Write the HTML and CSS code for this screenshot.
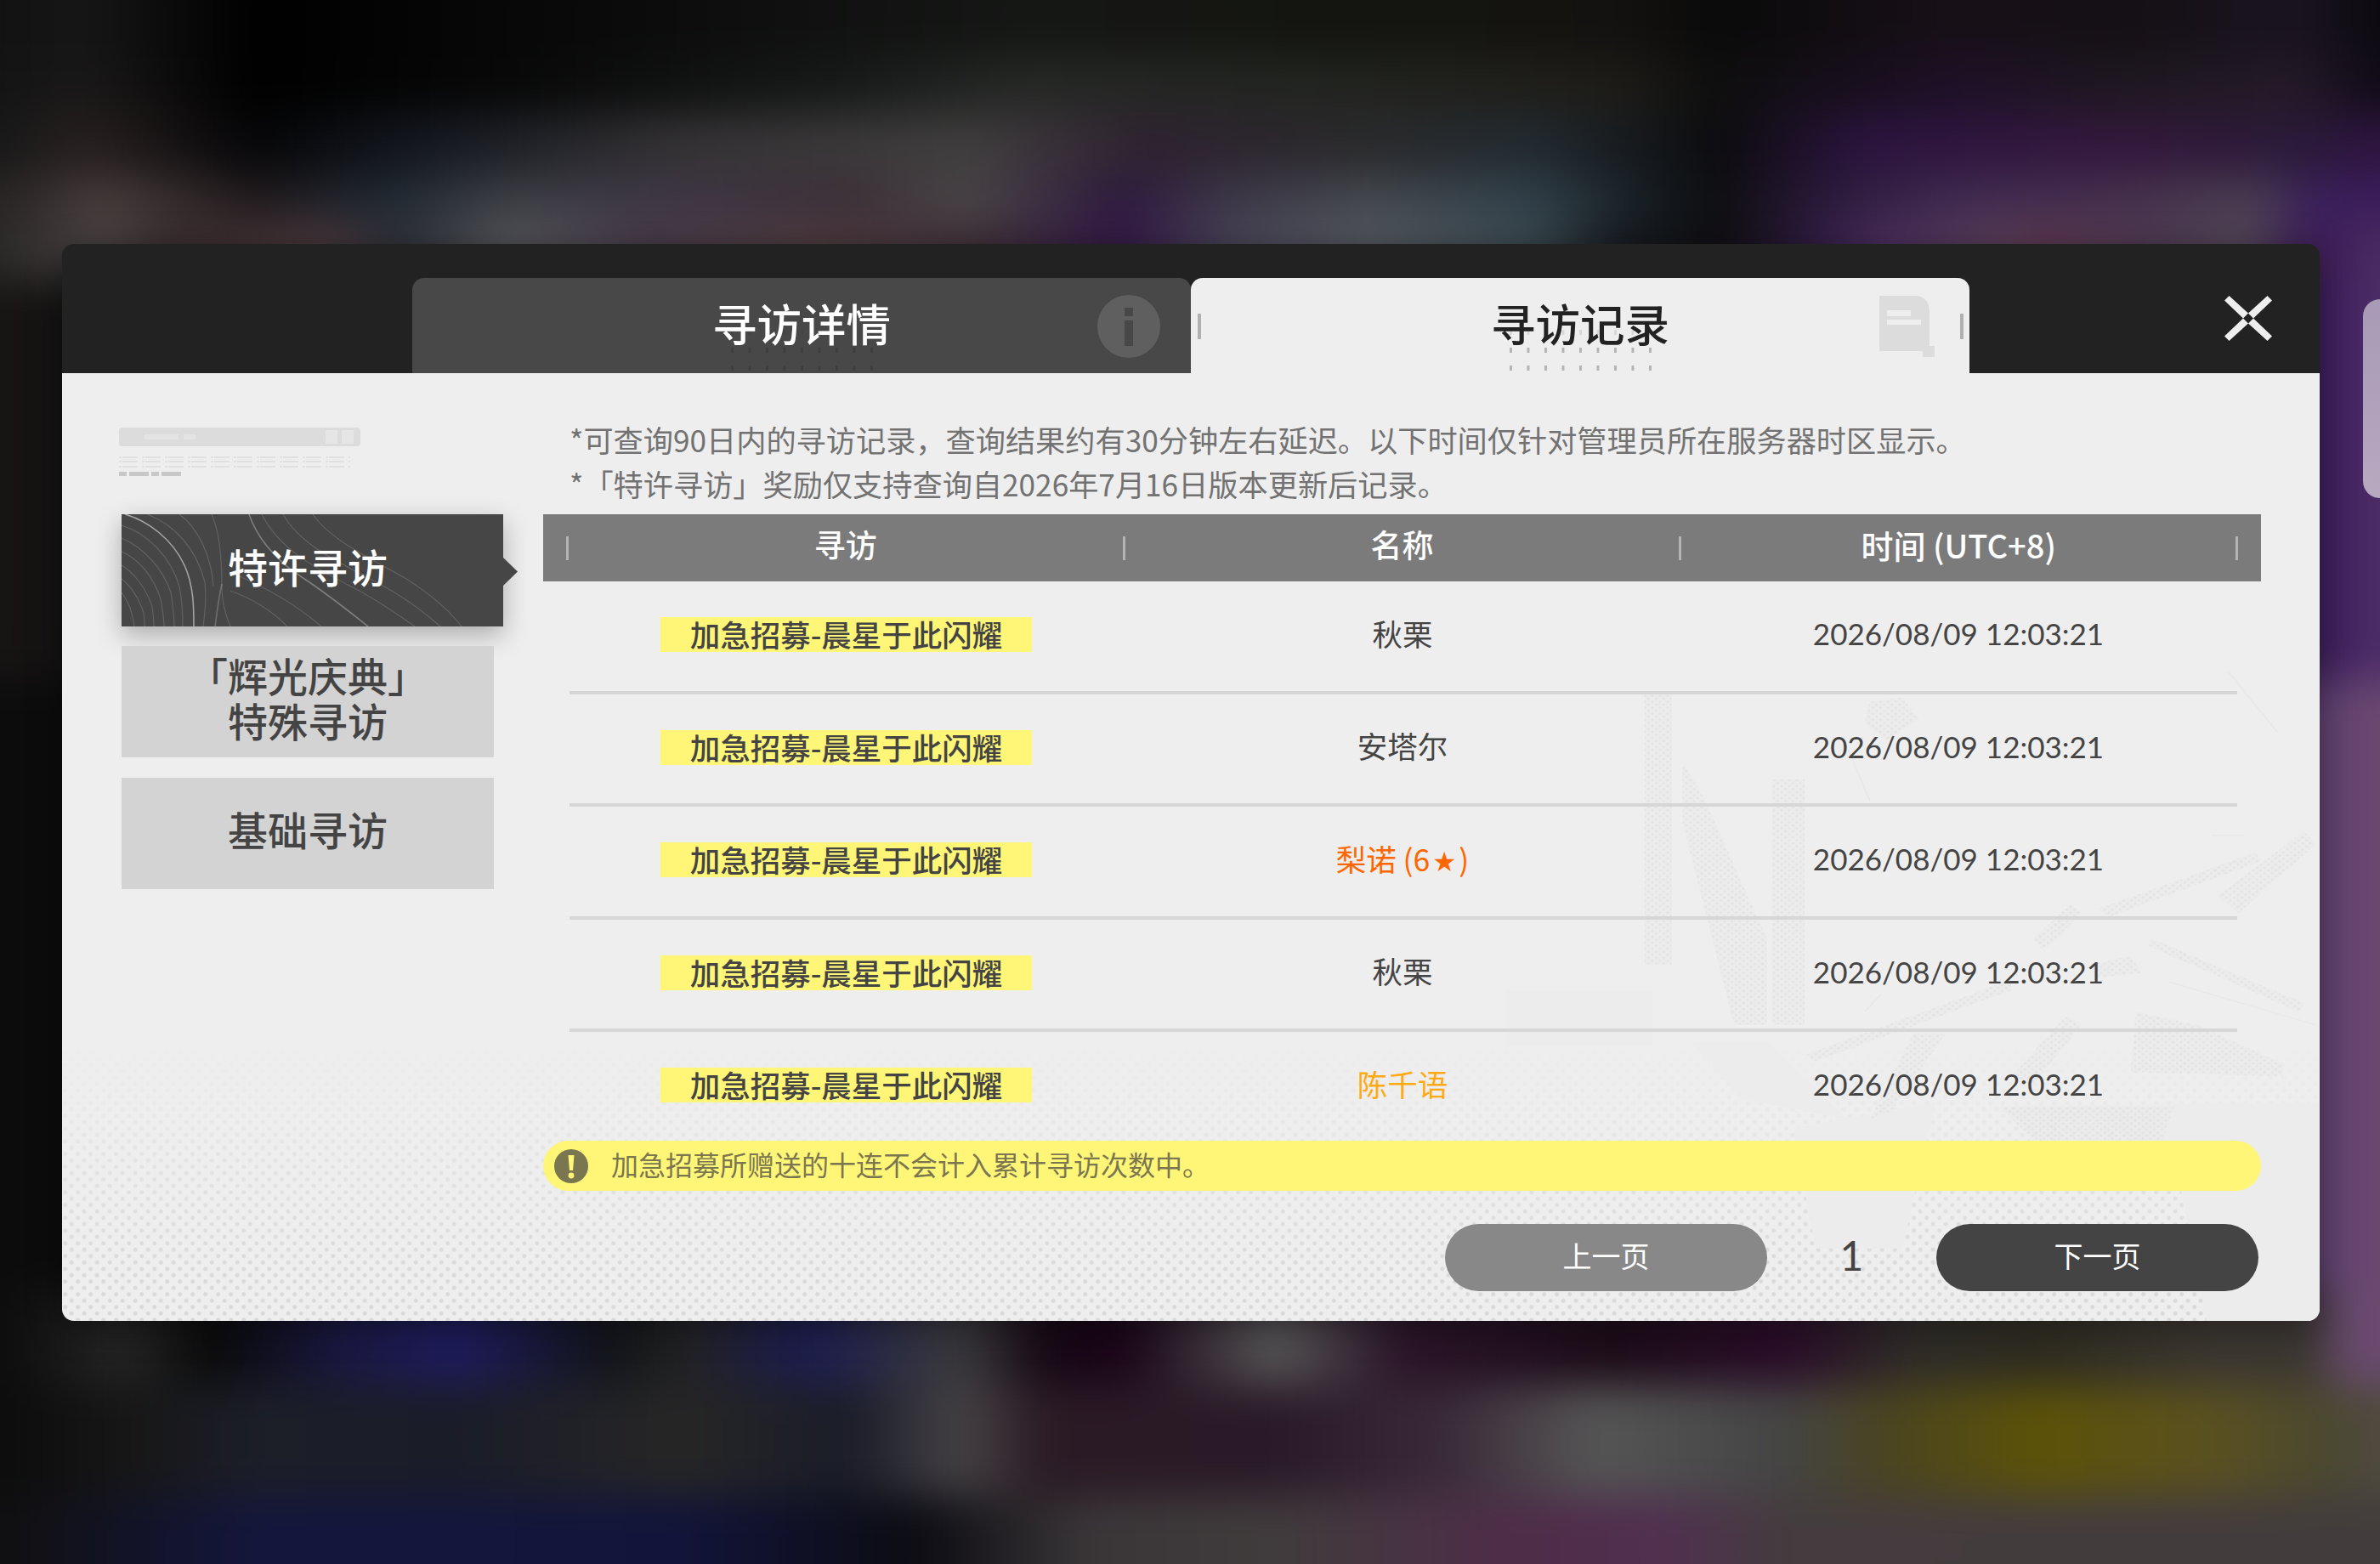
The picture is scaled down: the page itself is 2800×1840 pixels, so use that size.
FILE: index.html
```html
<!DOCTYPE html>
<html lang="zh-CN">
<head>
<meta charset="utf-8">
<title>寻访记录</title>
<link rel="stylesheet" href="styles.css">
</head>
<body>
<div class="backdrop">
  <div class="band b0"></div>
  <div class="band b1"></div>
  <div class="band b2"></div>
  <div class="band b3"></div>
  <div class="band b4"></div>
  <div class="band b5"></div>
  <div class="band b6"></div>
  <div class="band b7"></div>
  <div class="band b8"></div>
  <div class="band b9"></div>
</div>
<div class="edge-handle"></div>
<section class="modal">
  <header class="modal-head">
    <nav class="tabs">
      <div class="tab tab-off">
        <span class="tab-label">寻访详情</span>
        <span class="tab-dots"></span>
        <svg class="tab-icon" viewBox="0 0 74 74"><circle cx="37" cy="37" r="37" fill="#5f5f5f"/><rect x="32" y="15" width="10" height="10" fill="#484848"/><rect x="32" y="30" width="10" height="30" fill="#484848"/></svg>
      </div>
      <div class="tab tab-on">
        <span class="tab-sep tab-sep-l"></span>
        <span class="tab-label">寻访记录</span>
        <span class="tab-dots"></span>
        <svg class="tab-icon tab-icon-doc" viewBox="0 0 66 72"><path d="M0 0H42C53 0 59 8 59 18V65H0Z" fill="#dcdcdc"/><rect x="9" y="17" width="28" height="7" fill="#eee"/><rect x="9" y="28" width="40" height="6" fill="#eee"/><rect x="51" y="59" width="14" height="13" fill="#dcdcdc"/></svg>
        <span class="tab-sep tab-sep-r"></span>
      </div>
    </nav>
    <svg class="close" viewBox="0 0 56 53"><path d="M0 5.5L5.500 0L28 20.500L22 26.500ZM56 5.500L50.500 0L28 20.500L34 26.500ZM0 47.500L5.500 53L28 32.500L22 26.500ZM56 47.500L50.500 53L28 32.500L34 26.500Z" fill="#eee"/></svg>
  </header>
  <div class="modal-body">
    <svg class="watermark" viewBox="0 0 1568 1568" preserveAspectRatio="none">
      <defs>
        <pattern id="wm" width="14" height="14" patternUnits="userSpaceOnUse">
          <rect width="14" height="14" fill="#ebebeb"/>
          <circle cx="3.500" cy="3.500" r="3" fill="#dedede"/>
          <circle cx="10.500" cy="10.500" r="3" fill="#dedede"/>
        </pattern>
      </defs>
      <g fill="#ececec">
        <path d="M70 800H340V930H70Z"/>
        <path d="M410 920H550L700 1100L500 1050Z"/>
        <path d="M970 1070L1568 1060V1568H1360L1300 1180L1130 1090L1050 1130Z"/>
        <path d="M600 1120L860 1060L800 1400L640 1400Z"/>
      </g>
      <g fill="url(#wm)" opacity=".6">
        <path d="M325 110H375V740H325Z"/>
        <path d="M560 310H620V880H560Z"/>
        <path d="M395 270L430 340L550 680V880H490L395 410Z"/>
        <path d="M620 950L1000 775V800L640 965Z"/>
        <path d="M1040 680L1110 600L1130 620L1060 710Z"/>
        <path d="M1160 610L1450 480L1460 500L1180 630Z"/>
        <path d="M1260 680L1540 830L1530 850L1250 695Z"/>
        <path d="M1230 850L1340 880L1500 970V1000L1220 990Z"/>
        <path d="M820 900H880L780 1080L740 1100Z"/>
        <path d="M1100 860L1130 880L1040 1020L1000 1000Z"/>
        <path d="M1380 580L1540 430L1560 460L1420 620Z"/>
        <path d="M740 130L800 120L830 170L770 220L730 180Z"/>
        <path d="M1150 740L1220 720L1240 760L1160 770Z"/>
        <path d="M980 1070L1300 1070L1250 1260L1130 1180L1040 1150Z"/>
      </g>
      <g fill="none" stroke="#e8e8e8" stroke-width="3">
        <path d="M700 240L740 360"/>
        <path d="M1400 60L1490 200"/>
        <path d="M1290 780L1560 880"/>
        <path d="M760 810L730 850"/>
        <path d="M1370 440H1430"/>
      </g>
    </svg>
    <aside class="side">
      <div class="promo">
        <div class="promo-bar"></div>
        <div class="promo-lines"></div>
        <div class="promo-tags"><i></i><i class="w"></i><i></i><i class="w"></i></div>
      </div>
      <div class="side-item side-item-on">
        <svg class="contour" viewBox="0 0 449 132" preserveAspectRatio="none">
          <g fill="none" stroke="#fff" stroke-opacity=".15" stroke-width="1.200">
            <path d="M0 13C30 22 58 50 68 85C71 100 72 118 72 132"/>
            <path d="M0 28C24 38 48 62 58 92C60 105 62 120 62 132"/>
            <path d="M0 44C20 52 38 74 46 100C48 112 50 122 50 132"/>
            <path d="M0 60C14 68 28 86 36 108C37 116 38 124 38 132"/>
            <path d="M0 76C10 84 20 98 26 116C27 122 27 127 27 132"/>
            <path d="M0 92C6 100 12 110 15 132"/>
            <path d="M30 0C62 12 88 40 98 80C100 100 98 118 96 132"/>
            <path d="M68 0C90 16 106 50 108 85"/>
            <path d="M106 0C115 20 118 50 118 85C118 100 122 118 128 132"/>
            <path d="M128 90C155 100 175 112 195 132"/>
            <path d="M132 70C165 84 205 106 235 132"/>
            <path d="M165 0C185 40 225 62 270 85C300 100 325 118 345 132"/>
            <path d="M190 0C210 36 255 56 300 80C330 96 355 114 375 132"/>
            <path d="M225 0C245 30 290 50 335 76C360 92 385 112 400 132"/>
          </g>
          <g fill="none" stroke="#fff" stroke-width="1.600">
            <path d="M4 0C32 8 60 30 74 60C85 84 85 110 85 132" stroke-opacity=".5"/>
            <path d="M118 82C114 100 112 118 110 132" stroke-opacity=".22"/>
            <path d="M150 0C158 24 178 52 212 74C240 92 265 112 290 132" stroke-opacity=".3"/>
          </g>
        </svg>
        <span class="side-label">特许寻访</span>
      </div>
      <div class="side-item"><span class="side-label">「辉光庆典」<br>特殊寻访</span></div>
      <div class="side-item"><span class="side-label">基础寻访</span></div>
    </aside>
    <main class="main">
      <div class="notes">
        <p>*可查询90日内的寻访记录，查询结果约有30分钟左右延迟。以下时间仅针对管理员所在服务器时区显示。</p>
        <p>*「特许寻访」奖励仅支持查询自2026年7月16日版本更新后记录。</p>
      </div>
      <div class="thead">
        <i class="sep"></i><span class="th">寻访</span><i class="sep"></i><span class="th">名称</span><i class="sep"></i><span class="th th-time">时间 (UTC+8)</span><i class="sep"></i>
      </div>
      <div class="rows">
        <div class="row"><span class="cell cell-mark"><b class="mark">加急招募-晨星于此闪耀</b></span><span class="cell">秋栗</span><span class="cell time">2026/08/09 12:03:21</span></div>
        <div class="row"><span class="cell cell-mark"><b class="mark">加急招募-晨星于此闪耀</b></span><span class="cell">安塔尔</span><span class="cell time">2026/08/09 12:03:21</span></div>
        <div class="row"><span class="cell cell-mark"><b class="mark">加急招募-晨星于此闪耀</b></span><span class="cell six">梨诺 (6<span class="star">★</span>)</span><span class="cell time">2026/08/09 12:03:21</span></div>
        <div class="row"><span class="cell cell-mark"><b class="mark">加急招募-晨星于此闪耀</b></span><span class="cell">秋栗</span><span class="cell time">2026/08/09 12:03:21</span></div>
        <div class="row"><span class="cell cell-mark"><b class="mark">加急招募-晨星于此闪耀</b></span><span class="cell five">陈千语</span><span class="cell time">2026/08/09 12:03:21</span></div>
      </div>
      <div class="alert">
        <svg class="alert-icon" viewBox="0 0 40 40"><circle cx="20" cy="20" r="20" fill="#7a7650"/><path d="M16.500 7H23.500L22 25H18Z" fill="#fff678"/><circle cx="20" cy="31" r="3.400" fill="#fff678"/></svg>
        <span class="alert-text">加急招募所赠送的十连不会计入累计寻访次数中。</span>
      </div>
      <div class="pager">
        <span class="btn btn-prev">上一页</span>
        <span class="page-no">1</span>
        <span class="btn btn-next">下一页</span>
      </div>
    </main>
  </div>
</section>
</body>
</html>
```
FILE: styles.css
```css
* { box-sizing: border-box; }
html, body { margin: 0; height: 1840px; }
body {
  width: 2800px;
  overflow: hidden;
  position: relative;
  padding: 287px 0 0 73px;
  font-family: "Noto Sans CJK SC", sans-serif;
  background: #08080a;
}
.backdrop {
  position: absolute;
  left: -60px;
  top: -60px;
  width: 2920px;
  height: 1960px;
  display: flex;
  flex-direction: column;
  filter: blur(24px);
}
.band { flex: none; }
.b0 { height: 128px; background: linear-gradient(90deg, #121212 60px, #161616 160px, #000 360px, #0a0a0a 760px, #151715 1260px, #141510 1660px, #141210 1960px, #0a0a0a 2080px, #181018 2360px, #141014 2560px, #1a1420 2760px, #0c0a10 2860px); }
.b1 { height: 67px; background: linear-gradient(90deg, #141414 60px, #1a1818 160px, #000 360px, #080808 660px, #181a1a 1060px, #262826 1260px, #222420 1660px, #1e1c18 1960px, #0e0e0e 2080px, #1e1028 2360px, #1e1820 2560px, #241a28 2760px, #100a18 2860px); }
.b2 { height: 70px; background: linear-gradient(90deg, #181818 60px, #282020 160px, #060608 360px, #141820 560px, #343234 860px, #403e3e 1200px, #2e2230 1410px, #2a2a2c 1660px, #222a30 1860px, #0c0c0e 2080px, #2c1440 2260px, #34183c 2560px, #2a1a38 2760px, #2e1440 2860px); }
.b3 { height: 57px; background: linear-gradient(90deg, #282424 60px, #463c3c 180px, #201a1c 360px, #202832 510px, #3c3e44 660px, #3e3644 860px, #3c3038 1060px, #484446 1200px, #2e1a3e 1380px, #3c3848 1510px, #44484e 1670px, #30404a 1860px, #141a1e 2010px, #0e0e10 2080px, #2a1a3a 2210px, #402a50 2360px, #44304c 2560px, #4a3c50 2710px, #38205a 2780px, #3c1c5c 2860px); }
.b4 { height: 68px; background: linear-gradient(90deg, #2a2828 60px, #4d4545 180px, #3a2c30 260px, #4d3a3e 440px, #2d3038 530px, #57585c 660px, #483c4a 810px, #503c40 1010px, #3f3038 1210px, #351848 1380px, #4a4558 1510px, #565a62 1670px, #3a4a50 1860px, #181c22 1960px, #0e0e10 2080px, #2c1a3c 2180px, #4a2c60 2260px, #5a4058 2410px, #5e3850 2460px, #4e3c54 2610px, #554a58 2700px, #3c1a58 2780px, #4a2c60 2860px); }
.b5 { height: 470px; background: linear-gradient(90deg, #181414 60px, #141212 133px, #222 1400px, #3c1c5a 2789px, #4e2e68 2860px); }
.b6 { height: 720px; background: linear-gradient(90deg, #0c0c0c 133px, #222 1400px, #5e4070 2789px, #6a4a70 2860px); }
.b7 { height: 110px; background: linear-gradient(90deg, #0c0c0c 60px, #252525 203px, #0a0a0a 310px, #1a1840 460px, #1e1c5c 600px, #121418 780px, #222 860px, #1c1c50 1010px, #3a3a3c 1190px, #160814 1290px, #1a0418 1381px, #555 1560px, #2a1428 1710px, #1c0c18 1960px, #2a0c28 2160px, #2e2c28 2310px, #2e2c20 2460px, #3a3630 2660px, #3a3630 2780px, #6a4a70 2820px); }
.b8 { height: 130px; background: linear-gradient(90deg, #0c0c0c 60px, #161616 203px, #1c1e28 360px, #1a1c28 600px, #262626 860px, #1a1c28 1060px, #454245 1190px, #2a1a24 1290px, #2a1a28 1560px, #3a2a38 1760px, #555 1935px, #444 2160px, #4a4420 2280px, #5c5208 2460px, #5a5020 2660px, #4a4830 2800px, #504a40 2860px); }
.b9 { height: 140px; background: linear-gradient(90deg, #101010 60px, #14163c 360px, #14163c 600px, #12143a 860px, #0c0c12 1140px, #3a3638 1340px, #403c3c 1560px, #4e2c48 1840px, #503050 2020px, #443c3e 2160px, #423c3c 2860px); }
.edge-handle {
  position: absolute;
  left: 2780px;
  top: 352px;
  width: 40px;
  height: 234px;
  border-radius: 22px;
  background: linear-gradient(#a899b6, #b8a8c0);
}
.modal {
  position: relative;
  width: 2656px;
  height: 1267px;
  background: #222;
  border-radius: 14px;
  overflow: hidden;
  box-shadow: 0 6px 40px rgba(0,0,0,.4);
}
.modal-head {
  height: 152px;
  padding: 40px 0 0 412px;
  display: flex;
  align-items: flex-start;
}
.tabs { display: flex; height: 112px; }
.tab {
  position: relative;
  width: 916px;
  height: 112px;
  border-radius: 14px 14px 0 0;
  display: flex;
  justify-content: center;
  padding-top: 15px;
}
.tab-off { background: #484848; color: #fff; }
.tab-on { background: #eee; color: #222; }
.tab-label { position: relative; z-index: 1; font-size: 52.500px; line-height: 74px; font-weight: 500; }
.tab-dots {
  position: absolute;
  left: 375px;
  top: 61px;
  width: 167px;
  height: 48px;
  background-image:
    linear-gradient(90deg, #3e3e3e 3px, transparent 3px),
    linear-gradient(90deg, #3e3e3e 3px, transparent 3px),
    linear-gradient(90deg, #444 3px, transparent 3px);
  background-size: 20.500px 6px;
  background-position: 0 21px, 0 42px, 0 0;
  background-repeat: repeat-x;
}
.tab-on .tab-dots {
  background-image:
    linear-gradient(90deg, #b4b4b4 3px, transparent 3px),
    linear-gradient(90deg, #b4b4b4 3px, transparent 3px),
    linear-gradient(90deg, #d8d8d8 3px, transparent 3px);
}
.tab-icon { position: absolute; left: 806px; top: 20px; width: 74px; height: 74px; }
.tab-icon-doc { left: 810px; top: 21px; width: 66px; height: 72px; }
.tab-sep { position: absolute; top: 42px; width: 4px; height: 30px; background: #b0b0b0; }
.tab-sep-l { left: 8px; }
.tab-sep-r { right: 7px; }
.close { width: 56px; height: 53px; margin: 21px 0 0 300px; }
.modal-body {
  position: relative;
  height: 1115px;
  display: flex;
  background-color: #eee;
  overflow: hidden;
}
.modal-body::before {
  content: "";
  position: absolute;
  inset: 0;
  background-image:
    radial-gradient(circle at 3.700px 3.700px, #dadada 0 1.800px, transparent 3.200px),
    radial-gradient(circle at 11.200px 11.200px, #dadada 0 1.800px, transparent 3.200px);
  background-size: 15px 15px;
  -webkit-mask-image: linear-gradient(transparent 790px, #000 1060px);
  mask-image: linear-gradient(transparent 790px, #000 1060px);
}
.watermark { position: absolute; left: 1654px; top: 321px; width: 1002px; height: 794px; }
.side {
  position: relative;
  width: 566px;
  flex: none;
  padding: 64px 0 0 70px;
}
.promo { height: 102px; margin-left: -3px; }
.promo-bar {
  width: 284px;
  height: 22px;
  border-radius: 4px;
  background-color: #dcdcdc;
  background-image:
    linear-gradient(#e4e4e4, #e4e4e4),
    linear-gradient(#e4e4e4, #e4e4e4),
    linear-gradient(#e6e6e6, #e6e6e6),
    linear-gradient(#e6e6e6, #e6e6e6);
  background-repeat: no-repeat;
  background-size: 40px 6px, 14px 6px, 14px 16px, 14px 16px;
  background-position: 30px 8px, 76px 8px, 243px 3px, 262px 3px;
  filter: blur(.6px);
}
.promo-lines {
  width: 272px;
  height: 16px;
  margin-top: 12px;
  background-image: repeating-linear-gradient(90deg, #e0e0e0 0 3px, transparent 3px 4px, #e0e0e0 4px 22px, transparent 22px 27px);
  -webkit-mask-image: repeating-linear-gradient(#000 0 2px, transparent 2px 5.500px);
  mask-image: repeating-linear-gradient(#000 0 2px, transparent 2px 5.500px);
  filter: blur(.5px);
}
.promo-tags { display: flex; gap: 3px; margin-top: 2px; filter: blur(.4px); }
.promo-tags i { width: 9px; height: 5px; background: #c8c8c8; }
.promo-tags i.w { width: 23px; }
.side-item {
  position: relative;
  width: 438px;
  height: 131px;
  margin-bottom: 24px;
  background: #d3d3d3;
  color: #444;
  display: flex;
  align-items: center;
  justify-content: center;
  text-align: center;
}
.side-label { position: relative; margin-top: -12px; font-size: 47px; line-height: 53px; font-weight: 500; }
.side-item-on {
  width: 449px;
  height: 132px;
  margin-bottom: 23px;
  padding-right: 11px;
  background: #464646;
  color: #fff;
  box-shadow: 0 10px 28px rgba(0,0,0,.28);
}
.side-item-on::after {
  content: "";
  position: absolute;
  left: 100%;
  top: 51px;
  width: 17px;
  height: 33px;
  background: #464646;
  clip-path: polygon(0 0, 100% 50%, 0 100%);
}
.contour { position: absolute; inset: 0; width: 100%; height: 100%; }
.main { position: relative; width: 2021px; padding-top: 52px; }
.notes { height: 114px; padding-left: 31px; color: #727272; font-size: 35.200px; line-height: 52px; }
.notes p { margin: 0; white-space: nowrap; }
.thead {
  height: 79px;
  padding: 0 27px;
  background: #7b7b7b;
  color: #fff;
  display: flex;
  align-items: center;
  font-size: 37px;
  font-weight: 500;
}
.sep { flex: none; width: 3px; height: 28px; background: #b4b4b4; }
.th { flex: 1; text-align: center; line-height: 79px; margin-top: -8px; }
.th-time { font-size: 38px; }
.rows { height: 658px; padding: 0 28px 0 31px; color: #444; font-size: 35.500px; }
.row {
  height: 132.500px;
  padding-bottom: 8px;
  border-bottom: 4px solid #d6d6d6;
  display: grid;
  grid-template-columns: 1fr 1fr 1fr;
  align-items: center;
  text-align: center;
}
.row:last-child { border-bottom-color: transparent; }
.cell { margin-left: -2px; }
.cell-mark { display: flex; justify-content: center; margin: 5px 0 0 -3px; }
.mark {
  width: 437px;
  height: 41px;
  line-height: 39px;
  background: #fff678;
  font-weight: 500;
}
.time { font-family: "Lato", "Noto Sans CJK SC", sans-serif; font-size: 35px; padding-top: 2px; }
.six { color: #f60; }
.five { color: #ffaa12; }
.star { font-size: 26px; margin: 0 4px; vertical-align: 2px; }
.alert {
  position: relative;
  height: 59px;
  padding-left: 13px;
  border-radius: 30px;
  background: #fff678;
  color: #7a7650;
  display: flex;
  align-items: center;
  gap: 27px;
  font-size: 32px;
}
.alert-text { margin-top: -6px; }
.alert-icon { width: 40px; height: 40px; flex: none; }
.pager {
  position: relative;
  display: flex;
  justify-content: flex-end;
  padding: 39px 3px 0 0;
}
.btn {
  width: 379px;
  height: 79px;
  border-radius: 40px;
  color: #fff;
  font-size: 34px;
  line-height: 74px;
  text-align: center;
}
.btn-prev { background: #888; }
.btn-next { background: #444; }
.page-no {
  width: 199px;
  color: #444;
  font-family: "Lato", sans-serif;
  font-size: 48px;
  line-height: 73px;
  text-align: center;
}
```
